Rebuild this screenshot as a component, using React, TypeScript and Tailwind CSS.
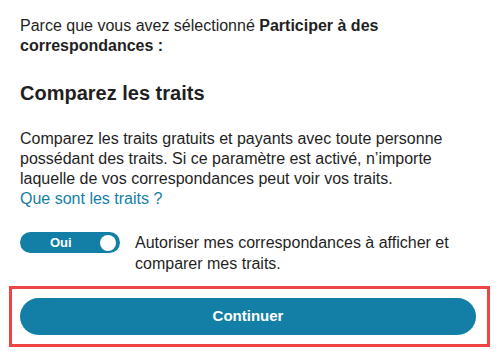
import { useState } from "react";

export default function App() {
  const [on, setOn] = useState(true);

  return (
    <div className="min-h-screen bg-white font-['Liberation_Sans',Arial,sans-serif] text-[#1f1f1f]">
      <div className="px-5 pt-[16px]">
        <p className="text-[16px] leading-[20px]">
          Parce que vous avez sélectionné{" "}
          <span className="font-bold">Participer à des correspondances :</span>
        </p>

        <h2 className="mt-[23px] text-[20px] font-bold leading-[28px]">
          Comparez les traits
        </h2>

        <p className="mt-[22px] text-[16px] leading-[20px]">
          Comparez les traits gratuits et payants avec toute personne
          possédant des traits. Si ce paramètre est activé, n’importe laquelle
          de vos correspondances peut voir vos traits.
        </p>
        <a href="#" className="block text-[16px] leading-[20px] text-[#137fa7]">
          Que sont les traits ?
        </a>

        <div className="mt-[23px] flex items-start gap-[15px]">
          <button
            type="button"
            onClick={() => setOn(!on)}
            className="flex h-[21px] w-[100px] shrink-0 items-center rounded-full bg-[#137fa7] pl-[30px] pr-[4px]"
          >
            <span className="text-[13px] font-bold text-white">
              {on ? "Oui" : "Non"}
            </span>
            <span className="ml-auto h-[16px] w-[16px] rounded-full bg-white" />
          </button>
          <p className="text-[16px] leading-[21px]">
            Autoriser mes correspondances à afficher et comparer mes traits.
          </p>
        </div>
      </div>

      <div className="mx-[9px] mt-[12px] border-[3px] border-[#f04444] py-[9px] pl-[8px] pr-[11px]">
        <button
          type="button"
          className="h-[37px] w-full rounded-full bg-[#137fa7] text-[15px] font-bold text-white"
        >
          Continuer
        </button>
      </div>
    </div>
  );
}
